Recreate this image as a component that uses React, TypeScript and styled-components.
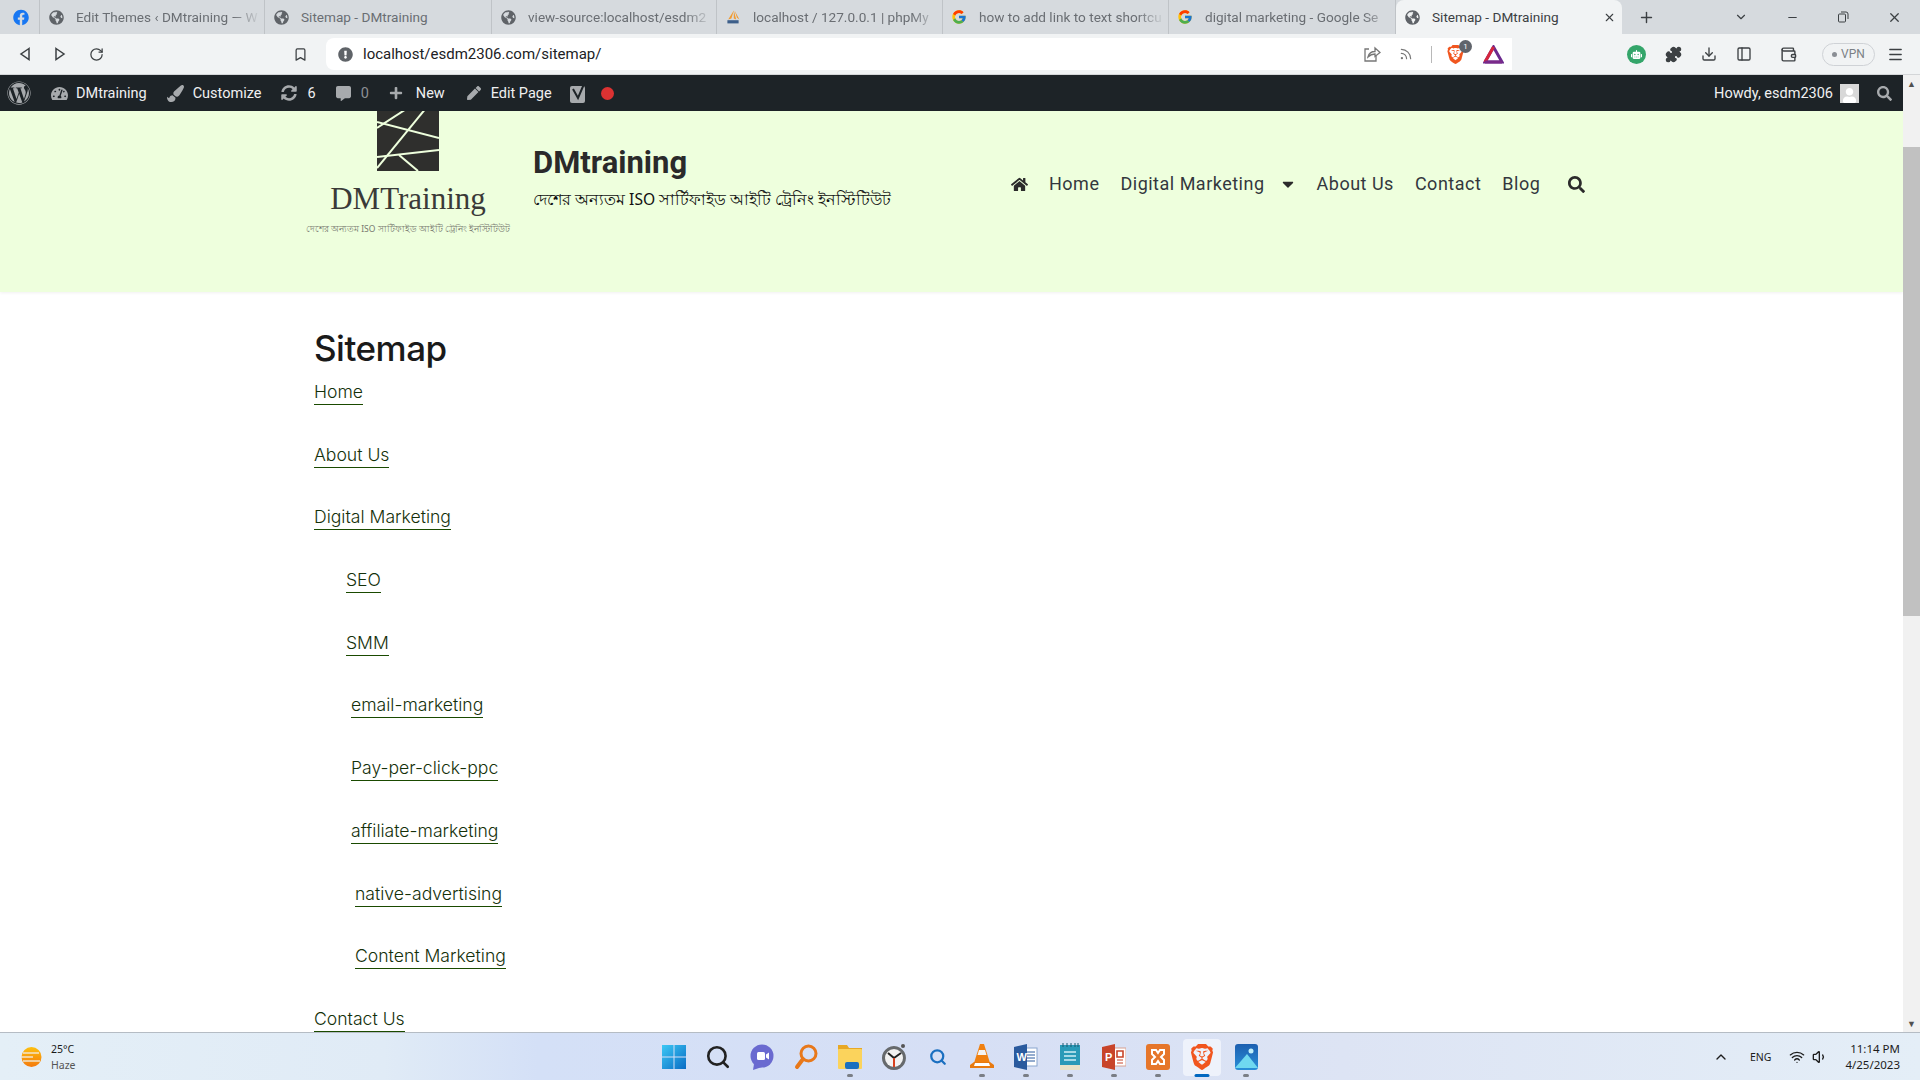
import styled, { createGlobalStyle } from "styled-components";
import { ChevronDown, ChevronUp, Minus, X, Plus, RotateCw, Bookmark, Rss, Puzzle, Download, PanelLeft, Wallet, Menu, Wifi, Volume1, Search } from "lucide-react";
import { FaFacebook, FaGlobeAmericas, FaWordpress, FaTachometerAlt, FaPaintBrush, FaSyncAlt, FaCommentAlt, FaPlus, FaPen, FaHome, FaSearch, FaCaretDown, FaUser, FaExclamationCircle, FaRobot } from "react-icons/fa";
import { FcGoogle } from "react-icons/fc";
import { SiBrave } from "react-icons/si";

const GlobalStyle = createGlobalStyle`
    html, body {
        margin: 0;
        padding: 0;
        overflow: hidden;
        background: #fff;
    }
    * { box-sizing: border-box; }
`;

const Screen = styled.div`
    width: 1920px;
    height: 1080px;
    display: flex;
    flex-direction: column;
    overflow: hidden;
    font-family: Roboto, "Liberation Sans", sans-serif;
`;

const TabStrip = styled.div`
    height: 34px;
    background: #d6dade;
    display: flex;
    align-items: stretch;
    flex-shrink: 0;
`;

const Tab = styled.div<{ $width: number; $active?: boolean; $lead?: number }>`
    width: ${p => p.$width}px;
    flex-shrink: 0;
    display: flex;
    align-items: center;
    gap: 12px;
    padding: 0 3px 0 ${p => p.$lead || 8}px;
    font-size: 13.6px;
    white-space: nowrap;
    overflow: hidden;
    color: ${p => (p.$active ? "#3c4043" : "#6a6e73")};
    background: ${p => (p.$active ? "#f1f3f4" : "transparent")};
    border-radius: ${p => (p.$active ? "8px 8px 0 0" : "0")};
    border-right: ${p => (p.$active ? "none" : "1px solid #bfc3c7")};
    height: 34px;
`;

const TabTitle = styled.span<{ $fade?: boolean }>`
    flex: 1;
    overflow: hidden;
    mask-image: ${p => (p.$fade ? "linear-gradient(90deg, #000 85%, transparent)" : "none")};
`;

const TabIcon = styled.span<{ $color?: string }>`
    width: 16px;
    height: 16px;
    flex-shrink: 0;
    display: flex;
    align-items: center;
    justify-content: center;
    color: ${p => p.$color || "#5f6368"};
`;

const TabClose = styled.span`
    display: flex;
    margin-right: 3px;
`;

const NewTab = styled.div`
    width: 48px;
    display: flex;
    align-items: center;
    justify-content: center;
    color: #3c4043;
`;

const WindowControls = styled.div`
    margin-left: auto;
    display: flex;
    align-items: center;
    gap: 38px;
    padding-right: 18px;
    color: #3c4043;
`;

const Toolbar = styled.div`
    height: 41px;
    flex-shrink: 0;
    background: #f1f3f4;
    border-bottom: 1px solid #d4d6d8;
    display: flex;
    align-items: center;
    color: #3c4043;
    padding-left: 19px;
`;

const NavButtons = styled.div`
    width: 307px;
    display: flex;
    align-items: center;
    gap: 23px;
`;

const SpacedBookmark = styled.span`
    margin-left: auto;
    margin-right: 18px;
    display: flex;
`;

const AddressBar = styled.div`
    width: 1186px;
    height: 32px;
    background: #fff;
    border-radius: 8px 0 0 8px;
    display: flex;
    align-items: center;
    padding: 0 8px 0 11px;
    gap: 10px;
    font-size: 15px;
    color: #3c4043;
`;

const Host = styled.span`
    color: #202124;
`;

const AddressActions = styled.div`
    margin-left: auto;
    display: flex;
    align-items: center;
    gap: 18px;
    color: #777;
`;

const Divider = styled.span`
    width: 1px;
    height: 17px;
    background: #b8b8b8;
`;

const BraveWrap = styled.span`
    position: relative;
    display: flex;
    color: #f1561f;
    margin-left: -4px;
`;

const BraveBadge = styled.span`
    position: absolute;
    top: -5px;
    right: -7px;
    width: 13px;
    height: 13px;
    border-radius: 50%;
    background: #60646b;
    color: #fff;
    font-size: 8px;
    display: flex;
    align-items: center;
    justify-content: center;
`;

const ToolbarRight = styled.div`
    display: flex;
    align-items: center;
    gap: 19px;
    padding-left: 115px;
    color: #3c4043;
    flex: 1;
`;

const Bot = styled.span`
    width: 19px;
    height: 19px;
    border-radius: 50%;
    background: #34a56a;
    color: #fff;
    display: flex;
    align-items: center;
    justify-content: center;
`;

const WalletSlot = styled.span`
    display: flex;
    margin-left: 9px;
`;

const VpnPill = styled.span`
    width: 53px;
    height: 23px;
    margin-left: 6px;
    border: 1px solid #cfd2d6;
    border-radius: 12px;
    display: flex;
    align-items: center;
    justify-content: center;
    gap: 4px;
    font-size: 12px;
    color: #7b7f85;
`;

const VpnDot = styled.span`
    width: 5px;
    height: 5px;
    border-radius: 50%;
    background: #8a8e94;
`;

const MenuSlot = styled.span`
    display: flex;
    margin-left: -7px;
`;

const Viewport = styled.div`
    flex: 1;
    display: flex;
    min-height: 0;
`;

const Page = styled.div`
    flex: 1;
    min-width: 0;
    display: flex;
    flex-direction: column;
    overflow: hidden;
`;

const AdminBar = styled.div`
    height: 36px;
    flex-shrink: 0;
    background: #1d2327;
    color: #f0f0f1;
    display: flex;
    align-items: center;
    font-size: 14.5px;
    padding: 0 11px 0 7px;
    gap: 20px;
`;

const AdminItem = styled.div<{ $gap?: number; $left?: number }>`
    display: flex;
    align-items: center;
    gap: ${p => p.$gap || 8}px;
    margin-left: ${p => p.$left || 0}px;
    white-space: nowrap;
`;

const AdminIcon = styled.span`
    display: flex;
    color: #a7aaad;
`;

const YoastSlot = styled.span`
    display: flex;
    margin-left: -3px;
`;

const MutedCount = styled.span`
    color: #8c8f94;
`;

const RecordDot = styled.span`
    width: 13px;
    height: 13px;
    border-radius: 50%;
    background: #dc3232;
    margin-left: -8px;
`;

const AdminRight = styled.div`
    margin-left: auto;
    display: flex;
    align-items: center;
    gap: 7px;
    white-space: nowrap;
`;

const Avatar = styled.span`
    width: 19px;
    height: 19px;
    background: #d8d8d8;
    color: #fff;
    display: flex;
    align-items: flex-end;
    justify-content: center;
    overflow: hidden;
    margin-right: 11px;
`;

const SiteHeader = styled.header`
    height: 181px;
    flex-shrink: 0;
    background: #eeffdd;
    box-shadow: 0 1px 3px rgba(0, 0, 0, 0.06);
    display: flex;
    align-items: flex-start;
    padding-left: 314px;
    overflow: hidden;
`;

const Logo = styled.div`
    width: 188px;
    margin-top: -9px;
    display: flex;
    flex-direction: column;
    align-items: center;
    flex-shrink: 0;
`;

const LogoName = styled.div`
    font-family: "Liberation Serif", serif;
    font-size: 31px;
    line-height: 34px;
    margin-top: 11px;
    color: #3a3a38;
`;

const LogoTag = styled.div`
    font-family: "Noto Sans", sans-serif;
    font-size: 8.5px;
    line-height: 12px;
    margin-top: 7px;
    color: #77796f;
    white-space: nowrap;
`;

const Brand = styled.div`
    margin-left: 31px;
    padding-top: 31px;
    width: 480px;
    flex-shrink: 0;
`;

const SiteTitle = styled.div`
    font-size: 31px;
    font-weight: 700;
    line-height: 42px;
    color: #2a2a2a;
`;

const SiteTagline = styled.div`
    font-family: "Noto Sans", "Liberation Sans", sans-serif;
    font-size: 15.6px;
    line-height: 24px;
    margin-top: 3px;
    color: #111;
    white-space: nowrap;
`;

const Nav = styled.nav`
    margin-left: -2px;
    margin-top: 60px;
    display: flex;
    align-items: center;
    gap: 21px;
    font-size: 18px;
    letter-spacing: 0.5px;
    line-height: 26px;
    color: #33373d;
    white-space: nowrap;
`;

const NavIcon = styled.span<{ $left?: number; $right?: number }>`
    display: flex;
    color: #2b2b2b;
    margin-left: ${p => p.$left || 0}px;
    margin-right: ${p => p.$right || 0}px;
`;

const Main = styled.main`
    padding: 34px 0 0 314px;
    font-family: Inter, "Liberation Sans", sans-serif;
`;

const Title = styled.h1`
    margin: 0;
    font-size: 35px;
    font-weight: 500;
    letter-spacing: -0.5px;
    line-height: 44px;
    color: #1a1a1a;
`;

const LinkList = styled.div`
    display: flex;
    flex-direction: column;
    align-items: flex-start;
    gap: 35.7px;
    margin-top: 8px;
`;

const SiteLink = styled.a<{ $indent?: number }>`
    font-size: 17.6px;
    font-weight: 300;
    line-height: 27px;
    height: 27px;
    color: #14300a;
    border-bottom: 1px solid #1a4a00;
    margin-left: ${p => p.$indent || 0}px;
`;

const Scrollbar = styled.div`
    width: 17px;
    flex-shrink: 0;
    background: #f1f1f1;
    display: flex;
    flex-direction: column;
    align-items: center;
    color: #505050;
`;

const ScrollUp = styled.div`
    height: 17px;
    display: flex;
    align-items: center;
    font-size: 9px;
`;

const ScrollThumb = styled.div`
    width: 100%;
    height: 469px;
    margin-top: 55px;
    background: #c1c1c1;
`;

const ScrollDown = styled.div`
    margin-top: auto;
    height: 17px;
    display: flex;
    align-items: center;
    font-size: 9px;
`;

const Taskbar = styled.div`
    height: 48px;
    flex-shrink: 0;
    border-top: 1px solid #b5bcc4;
    background: linear-gradient(90deg, #e4eff7 0%, #e0ebf6 20%, #d4e0f7 28%, #d6dff5 50%, #dde4f4 70%, #e4eef7 100%);
    display: grid;
    grid-template-columns: 1fr auto 1fr;
    align-items: center;
    font-family: "Noto Sans", "Open Sans", sans-serif;
`;

const Weather = styled.div`
    display: flex;
    align-items: center;
    gap: 9px;
    padding-left: 20px;
`;

const WeatherText = styled.div`
    font-size: 10.5px;
    line-height: 16px;
    color: #1a1a1a;
`;

const WeatherSub = styled.div`
    color: #555;
`;

const TaskIcons = styled.div`
    display: flex;
`;

const TaskItem = styled.div<{ $active?: boolean }>`
    width: 44px;
    height: 46px;
    display: flex;
    align-items: center;
    justify-content: center;
    position: relative;
    &::before {
        content: "";
        display: ${p => (p.$active ? "block" : "none")};
        position: absolute;
        inset: 5px 3px 4px;
        background: #eef2fb;
        border-radius: 4px;
    }
    & > svg {
        position: relative;
    }
`;

const RunDot = styled.span<{ $active?: boolean }>`
    position: absolute;
    bottom: 3px;
    left: 50%;
    transform: translateX(-50%);
    width: ${p => (p.$active ? 15 : 6)}px;
    height: 3px;
    border-radius: 2px;
    background: ${p => (p.$active ? "#0067c0" : "#7a7e85")};
`;

const Tray = styled.div`
    display: flex;
    align-items: center;
    justify-content: flex-end;
    padding-right: 20px;
    color: #1c1c1c;
`;

const TrayLang = styled.span`
    font-size: 10.5px;
    margin: 0 18px 0 21px;
`;

const TrayIcons = styled.span`
    display: flex;
    align-items: center;
    gap: 7px;
    margin-right: 17px;
`;

const Clock = styled.div`
    font-size: 11.5px;
    line-height: 16px;
    text-align: right;
`;

const tabs = [
    { title: "Edit Themes ‹ DMtraining — W", width: 225, icon: "globe" },
    { title: "Sitemap - DMtraining", width: 227, icon: "globe" },
    { title: "view-source:localhost/esdm2", width: 225, icon: "globe" },
    { title: "localhost / 127.0.0.1 | phpMy", width: 226, icon: "pma" },
    { title: "how to add link to text shortcu", width: 226, icon: "google" },
    { title: "digital marketing - Google Se", width: 227, icon: "google" },
];

const links = [
    { label: "Home", indent: 0 },
    { label: "About Us", indent: 0 },
    { label: "Digital Marketing", indent: 0 },
    { label: "SEO", indent: 32 },
    { label: "SMM", indent: 32 },
    { label: "email-marketing", indent: 37 },
    { label: "Pay-per-click-ppc", indent: 37 },
    { label: "affiliate-marketing", indent: 37 },
    { label: "native-advertising", indent: 41 },
    { label: "Content Marketing", indent: 41 },
    { label: "Contact Us", indent: 0 },
];

const PmaIcon = () => (
    <svg width="20" height="18" viewBox="0 0 20 18">
        <path d="M11 1 L8 11 L4 12 Z M11 1 L11 11 L14 12 Z M12 1 L15 10 L18 12 Z" fill="#f29a2e" />
        <rect x="3" y="13" width="14" height="4" fill="#3d5f8a" />
    </svg>
);

const TabGlyph = ({ kind }: { kind: string }) => {
    if (kind === "google") return <FcGoogle size={16} />;
    if (kind === "pma") return <PmaIcon />;
    return <FaGlobeAmericas size={15} />;
};

const ShareIcon = () => (
    <svg width="18" height="18" viewBox="0 0 18 18" fill="none" stroke="currentColor" strokeWidth="1.3">
        <path d="M6 4 H2 V16 H13 V11" />
        <path d="M5 12 C6 8 9 6.5 12 6.5 V3 L17 7.5 L12 11.5 V9 C9 9 7 10 5 12 Z" />
    </svg>
);

const YoastIcon = () => (
    <svg width="20" height="21" viewBox="0 0 20 21">
        <rect x="1" y="3" width="15" height="17" rx="2" fill="#a7aaad" />
        <path d="M4 6 L9 15 L15 1" fill="none" stroke="#1d2327" strokeWidth="2" />
    </svg>
);

const LogoMark = () => (
    <svg width="62" height="69" viewBox="0 0 62 69">
        <rect width="62" height="69" fill="#2f2f2d" />
        <g stroke="#eeffdd" strokeWidth="2" fill="none">
            <path d="M0 20 L62 36" />
            <path d="M0 55 L62 48" />
            <path d="M0 26 L40 0" />
            <path d="M0 66 L54 0" />
            <path d="M22 53 L41 69" />
        </g>
    </svg>
);

const RewardsTriangle = () => (
    <svg width="21" height="19" viewBox="0 0 21 19">
        <path d="M10.5 2 L19 17 L2 17 Z" fill="none" stroke="#6b2a8e" strokeWidth="3" />
        <path d="M10.5 2 L2 17" fill="none" stroke="#d6263c" strokeWidth="3" />
        <path d="M2 17 L19 17" fill="none" stroke="#7a2a8a" strokeWidth="3" />
    </svg>
);

const SunIcon = () => (
    <svg width="22" height="22" viewBox="0 0 22 22">
        <defs>
            <linearGradient id="sun" x1="0" y1="0" x2="0" y2="1">
                <stop offset="0" stopColor="#fdc010" />
                <stop offset="1" stopColor="#f47a0c" />
            </linearGradient>
        </defs>
        <circle cx="11.5" cy="11" r="10" fill="url(#sun)" />
        <g stroke="#f3ead8" strokeWidth="1.4">
            <path d="M3 7 H19" />
            <path d="M1 11 H13" />
            <path d="M3 15 H20" />
        </g>
    </svg>
);

const WindowsIcon = () => (
    <svg width="24" height="24" viewBox="0 0 24 24">
        <defs>
            <linearGradient id="win" x1="0" y1="0" x2="1" y2="1">
                <stop offset="0" stopColor="#3cc8f5" />
                <stop offset="1" stopColor="#0a6cc4" />
            </linearGradient>
        </defs>
        <path d="M0 0 H11.5 V11.5 H0 Z M12.5 0 H24 V11.5 H12.5 Z M0 12.5 H11.5 V24 H0 Z M12.5 12.5 H24 V24 H12.5 Z" fill="url(#win)" />
    </svg>
);

const MeetIcon = () => (
    <svg width="24" height="26" viewBox="0 0 24 26">
        <circle cx="12" cy="12" r="11.5" fill="#6a6ad0" />
        <path d="M4 20 L3 26 L12 23 Z" fill="#6a6ad0" />
        <rect x="7" y="8" width="8" height="8" rx="1.5" fill="#fff" />
        <path d="M16 10.5 L19 8.5 V15.5 L16 13.5 Z" fill="#fff" />
    </svg>
);

const FinderIcon = () => (
    <svg width="24" height="26" viewBox="0 0 24 26">
        <circle cx="14.5" cy="9.5" r="7.5" fill="none" stroke="#e8781a" strokeWidth="3" />
        <path d="M9 15 L3 23" stroke="#e8781a" strokeWidth="4" strokeLinecap="round" />
    </svg>
);

const FolderIcon = () => (
    <svg width="24" height="26" viewBox="0 0 24 26">
        <path d="M0 1 H9 L11 4 H24 V8 H0 Z" fill="#e8a825" />
        <rect y="5" width="24" height="20" rx="1" fill="#fbd35c" />
        <rect x="7" y="18" width="14" height="7" rx="2" fill="#1a6fc0" />
    </svg>
);

const ClockIcon = () => (
    <svg width="26" height="28" viewBox="0 0 26 28">
        <path d="M13 3 A12 12 0 1 1 12.9 3 Z" fill="#66696c" />
        <circle cx="13" cy="15" r="9" fill="#f2f2f2" />
        <path d="M13 15 L7 10 M13 15 L20 10" stroke="#222" strokeWidth="2" />
        <path d="M13 15 V24" stroke="#d8401e" strokeWidth="2" />
        <circle cx="22" cy="3" r="2" fill="#555" />
    </svg>
);

const VlcIcon = () => (
    <svg width="24" height="26" viewBox="0 0 24 26">
        <path d="M10 0 H14 L20 19 H4 Z" fill="#f08010" />
        <path d="M9 6 H15 L16.5 11 H7.5 Z" fill="#f4f4f4" />
        <path d="M0 21 L4 18 H20 L24 21 V24 H0 Z" fill="#e87a10" />
        <path d="M5 19 H19 L20 22 H4 Z" fill="#fff" />
    </svg>
);

const WordIcon = () => (
    <svg width="24" height="26" viewBox="0 0 24 26">
        <rect x="8" y="4" width="15" height="18" fill="#fff" stroke="#8aa6cf" />
        <path d="M11 8 H21 M11 11 H21 M11 14 H21 M11 17 H21" stroke="#2a5a9e" />
        <path d="M0 3 L13 0 V26 L0 23 Z" fill="#2a5a9e" />
        <text x="2.5" y="17" fontSize="11" fontWeight="700" fill="#fff" fontFamily="Liberation Sans">W</text>
    </svg>
);

const NotesIcon = () => (
    <svg width="20" height="28" viewBox="0 0 20 28">
        <rect y="2" width="20" height="24" fill="#2a9ab8" />
        <rect y="22" width="20" height="5" fill="#e8e2c8" />
        <path d="M3 0 V4 M7 0 V4 M11 0 V4 M15 0 V4 M18 0 V4" stroke="#1a5a72" />
        <path d="M4 9 H16 M4 13 H16 M4 17 H16" stroke="#d0eef5" strokeWidth="1.4" />
    </svg>
);

const PowerPointIcon = () => (
    <svg width="24" height="26" viewBox="0 0 24 26">
        <rect x="9" y="4" width="15" height="18" fill="#fff" stroke="#d8a090" />
        <path d="M15 7 H21 V13 H15 Z" fill="none" stroke="#c8442a" strokeWidth="1.6" />
        <path d="M15 16 H21 M15 19 H21" stroke="#c8442a" />
        <path d="M0 3 L13 0 V26 L0 23 Z" fill="#c8442a" />
        <text x="3" y="17" fontSize="11" fontWeight="700" fill="#fff" fontFamily="Liberation Sans">P</text>
    </svg>
);

const XamppIcon = () => (
    <svg width="24" height="26" viewBox="0 0 24 26">
        <rect width="24" height="26" rx="3" fill="#e6762a" />
        <path d="M6 6 H10 L12 9 L14 6 H18 V10 L15 13 L18 16 V20 H14 L12 17 L10 20 H6 V16 L9 13 L6 10 Z" fill="none" stroke="#fff" strokeWidth="2" />
    </svg>
);

const PhotosIcon = () => (
    <svg width="23" height="26" viewBox="0 0 23 26">
        <defs>
            <linearGradient id="ph" x1="0" y1="0" x2="0" y2="1">
                <stop offset="0" stopColor="#1c5fb0" />
                <stop offset="1" stopColor="#2a8fd8" />
            </linearGradient>
        </defs>
        <rect width="23" height="26" rx="3" fill="url(#ph)" />
        <path d="M0 24 L12 10 L23 24 Z" fill="#6fd8f0" />
        <circle cx="16" cy="7" r="2.5" fill="#bfeefa" />
    </svg>
);

const App = () => {
    return (
        <Screen>
            <GlobalStyle />

            <TabStrip>
                <Tab $width={40} $lead={13}>
                    <TabIcon $color="#1877f2"><FaFacebook size={17} /></TabIcon>
                </Tab>
                {tabs.map(t => (
                    <Tab key={t.title} $width={t.width}>
                        <TabIcon><TabGlyph kind={t.icon} /></TabIcon>
                        <TabTitle $fade={t.title !== "Sitemap - DMtraining"}>{t.title}</TabTitle>
                    </Tab>
                ))}
                <Tab $width={226} $active>
                    <TabIcon><FaGlobeAmericas size={15} /></TabIcon>
                    <TabTitle>Sitemap - DMtraining</TabTitle>
                    <TabClose><X size={13} /></TabClose>
                </Tab>
                <NewTab><Plus size={17} /></NewTab>
                <WindowControls>
                    <ChevronDown size={14} />
                    <Minus size={13} />
                    <svg width="12" height="12" viewBox="0 0 12 12" fill="none" stroke="currentColor">
                        <rect x="1.5" y="3" width="7" height="8" rx="1" />
                        <path d="M4 1 H9 A2 2 0 0 1 11 3 V8" />
                    </svg>
                    <X size={15} />
                </WindowControls>
            </TabStrip>

            <Toolbar>
                <NavButtons>
                    <svg width="12" height="14" viewBox="0 0 12 14" fill="none" stroke="currentColor" strokeWidth="1.5">
                        <path d="M10 1.5 L2 7 L10 12.5 Z" />
                    </svg>
                    <svg width="12" height="14" viewBox="0 0 12 14" fill="none" stroke="currentColor" strokeWidth="1.5">
                        <path d="M2 1.5 L10 7 L2 12.5 Z" />
                    </svg>
                    <RotateCw size={15} />
                    <SpacedBookmark><Bookmark size={15} /></SpacedBookmark>
                </NavButtons>
                <AddressBar>
                    <TabIcon $color="#5f6368"><FaExclamationCircle size={15} /></TabIcon>
                    <Host>localhost/esdm2306.com/sitemap/</Host>
                    <AddressActions>
                        <ShareIcon />
                        <Rss size={14} />
                        <Divider />
                        <BraveWrap>
                            <SiBrave size={19} />
                            <BraveBadge>1</BraveBadge>
                        </BraveWrap>
                        <RewardsTriangle />
                    </AddressActions>
                </AddressBar>
                <ToolbarRight>
                    <Bot><FaRobot size={11} /></Bot>
                    <Puzzle size={17} fill="#3c4043" />
                    <Download size={16} />
                    <PanelLeft size={16} />
                    <WalletSlot><Wallet size={17} /></WalletSlot>
                    <VpnPill><VpnDot />VPN</VpnPill>
                    <MenuSlot><Menu size={17} /></MenuSlot>
                </ToolbarRight>
            </Toolbar>

            <Viewport>
                <Page>
                    <AdminBar>
                        <AdminIcon><FaWordpress size={24} /></AdminIcon>
                        <AdminItem>
                            <AdminIcon><FaTachometerAlt size={17} /></AdminIcon>
                            DMtraining
                        </AdminItem>
                        <AdminItem $gap={9}>
                            <AdminIcon><FaPaintBrush size={17} /></AdminIcon>
                            Customize
                        </AdminItem>
                        <AdminItem $gap={10}>
                            <AdminIcon><FaSyncAlt size={16} /></AdminIcon>
                            6
                        </AdminItem>
                        <AdminItem $gap={10}>
                            <AdminIcon><FaCommentAlt size={15} /></AdminIcon>
                            <MutedCount>0</MutedCount>
                        </AdminItem>
                        <AdminItem $gap={13}>
                            <AdminIcon><FaPlus size={14} /></AdminIcon>
                            New
                        </AdminItem>
                        <AdminItem $gap={10} $left={2}>
                            <AdminIcon><FaPen size={14} /></AdminIcon>
                            Edit Page
                        </AdminItem>
                        <YoastSlot><YoastIcon /></YoastSlot>
                        <RecordDot />
                        <AdminRight>
                            Howdy, esdm2306
                            <Avatar><FaUser size={15} /></Avatar>
                            <AdminIcon><FaSearch size={15} /></AdminIcon>
                        </AdminRight>
                    </AdminBar>

                    <SiteHeader>
                        <Logo>
                            <LogoMark />
                            <LogoName>DMTraining</LogoName>
                            <LogoTag>দেশের অন্যতম ISO সার্টিফাইড আইটি ট্রেনিং ইনস্টিটিউট</LogoTag>
                        </Logo>
                        <Brand>
                            <SiteTitle>DMtraining</SiteTitle>
                            <SiteTagline>দেশের অন্যতম ISO সার্টিফাইড আইটি ট্রেনিং ইনস্টিটিউট</SiteTagline>
                        </Brand>
                        <Nav>
                            <NavIcon><FaHome size={17} /></NavIcon>
                            <span>Home</span>
                            <span>Digital Marketing</span>
                            <NavIcon $left={-7} $right={-1}><FaCaretDown size={18} /></NavIcon>
                            <span>About Us</span>
                            <span>Contact</span>
                            <span>Blog</span>
                            <NavIcon $left={7}><FaSearch size={17} /></NavIcon>
                        </Nav>
                    </SiteHeader>

                    <Main>
                        <Title>Sitemap</Title>
                        <LinkList>
                            {links.map(l => (
                                <SiteLink key={l.label} $indent={l.indent}>{l.label}</SiteLink>
                            ))}
                        </LinkList>
                    </Main>
                </Page>
                <Scrollbar>
                    <ScrollUp>▲</ScrollUp>
                    <ScrollThumb />
                    <ScrollDown>▼</ScrollDown>
                </Scrollbar>
            </Viewport>

            <Taskbar>
                <Weather>
                    <SunIcon />
                    <WeatherText>
                        25°C
                        <WeatherSub>Haze</WeatherSub>
                    </WeatherText>
                </Weather>
                <TaskIcons>
                    <TaskItem><WindowsIcon /></TaskItem>
                    <TaskItem><Search size={26} color="#222" strokeWidth={2.4} /></TaskItem>
                    <TaskItem><MeetIcon /></TaskItem>
                    <TaskItem><FinderIcon /></TaskItem>
                    <TaskItem><FolderIcon /><RunDot /></TaskItem>
                    <TaskItem><ClockIcon /></TaskItem>
                    <TaskItem><Search size={18} color="#1a6fc0" strokeWidth={3} /></TaskItem>
                    <TaskItem><VlcIcon /><RunDot /></TaskItem>
                    <TaskItem><WordIcon /><RunDot /></TaskItem>
                    <TaskItem><NotesIcon /><RunDot /></TaskItem>
                    <TaskItem><PowerPointIcon /><RunDot /></TaskItem>
                    <TaskItem><XamppIcon /><RunDot /></TaskItem>
                    <TaskItem $active><SiBrave size={26} color="#f1561f" /><RunDot $active /></TaskItem>
                    <TaskItem><PhotosIcon /><RunDot /></TaskItem>
                </TaskIcons>
                <Tray>
                    <ChevronUp size={16} />
                    <TrayLang>ENG</TrayLang>
                    <TrayIcons>
                        <Wifi size={16} />
                        <Volume1 size={16} />
                    </TrayIcons>
                    <Clock>
                        11:14 PM
                        <div>4/25/2023</div>
                    </Clock>
                </Tray>
            </Taskbar>
        </Screen>
    );
};

export default App;
